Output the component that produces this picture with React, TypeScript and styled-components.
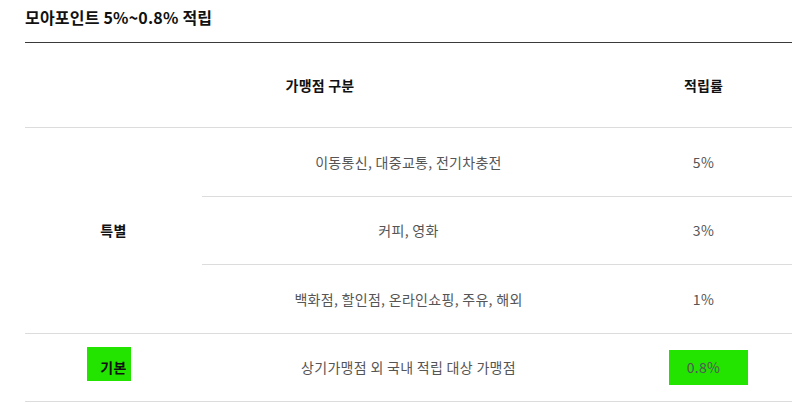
import React from "react";
import styled, { createGlobalStyle } from "styled-components";

const Global = createGlobalStyle`
  html, body { margin: 0; padding: 0; background: #fff; }
  body { font-family: "Noto Sans CJK KR", "Noto Sans", sans-serif; }
`;

const Wrap = styled.div`
  padding: 0 12px 0 25px;
  width: 767px;
`;

const Title = styled.h3`
  margin: 0;
  height: 42px;
  display: flex;
  align-items: center;
  padding-bottom: 8px;
  box-sizing: border-box;
  font-size: 16px;
  font-weight: 700;
  color: #111;
  letter-spacing: 0.2px;
`;

const Table = styled.table`
  width: 767px;
  border-collapse: collapse;
  border-top: 1px solid #3a3a3a;
  table-layout: fixed;
`;

const Th = styled.th`
  height: 84px;
  padding: 0;
  font-size: 14px;
  font-weight: 700;
  color: #111;
  text-align: center;
  border-bottom: 1px solid #dcdcdc;
  letter-spacing: 0.2px;
`;

const Td = styled.td<{ $strong?: boolean }>`
  height: 67.5px;
  padding: 0;
  font-size: 14px;
  font-weight: ${(p) => (p.$strong ? 700 : 400)};
  color: ${(p) => (p.$strong ? "#111" : "#555")};
  text-align: center;
  border-bottom: 1px solid #dcdcdc;
  letter-spacing: 0.3px;
`;

const Mark = styled.span`
  position: relative;
  display: inline-block;
`;

const Highlight = styled.span<{ $l: number; $t: number; $w: number; $h: number }>`
  position: absolute;
  left: ${(p) => p.$l}px;
  top: ${(p) => p.$t}px;
  width: ${(p) => p.$w}px;
  height: ${(p) => p.$h}px;
  background: #23e400;
  z-index: 0;
`;

const MarkText = styled.span`
  position: relative;
  z-index: 1;
`;

export default function App() {
  return (
    <>
      <Global />
      <Wrap>
        <Title>모아포인트 5%~0.8% 적립</Title>
        <Table>
          <colgroup>
            <col style={{ width: 177 }} />
            <col style={{ width: 413 }} />
            <col style={{ width: 177 }} />
          </colgroup>
          <thead>
            <tr>
              <Th colSpan={2}>가맹점 구분</Th>
              <Th>적립률</Th>
            </tr>
          </thead>
          <tbody>
            <tr>
              <Td rowSpan={3} $strong>
                특별
              </Td>
              <Td>이동통신, 대중교통, 전기차충전</Td>
              <Td>5%</Td>
            </tr>
            <tr>
              <Td>커피, 영화</Td>
              <Td>3%</Td>
            </tr>
            <tr>
              <Td>백화점, 할인점, 온라인쇼핑, 주유, 해외</Td>
              <Td>1%</Td>
            </tr>
            <tr>
              <Td $strong>
                <Mark>
                  <Highlight $l={-13} $t={-10} $w={44} $h={34} />
                  <MarkText>기본</MarkText>
                </Mark>
              </Td>
              <Td>상기가맹점 외 국내 적립 대상 가맹점</Td>
              <Td>
                <Mark>
                  <Highlight $l={-18} $t={-7} $w={79} $h={35} />
                  <MarkText>0.8%</MarkText>
                </Mark>
              </Td>
            </tr>
          </tbody>
        </Table>
      </Wrap>
    </>
  );
}
